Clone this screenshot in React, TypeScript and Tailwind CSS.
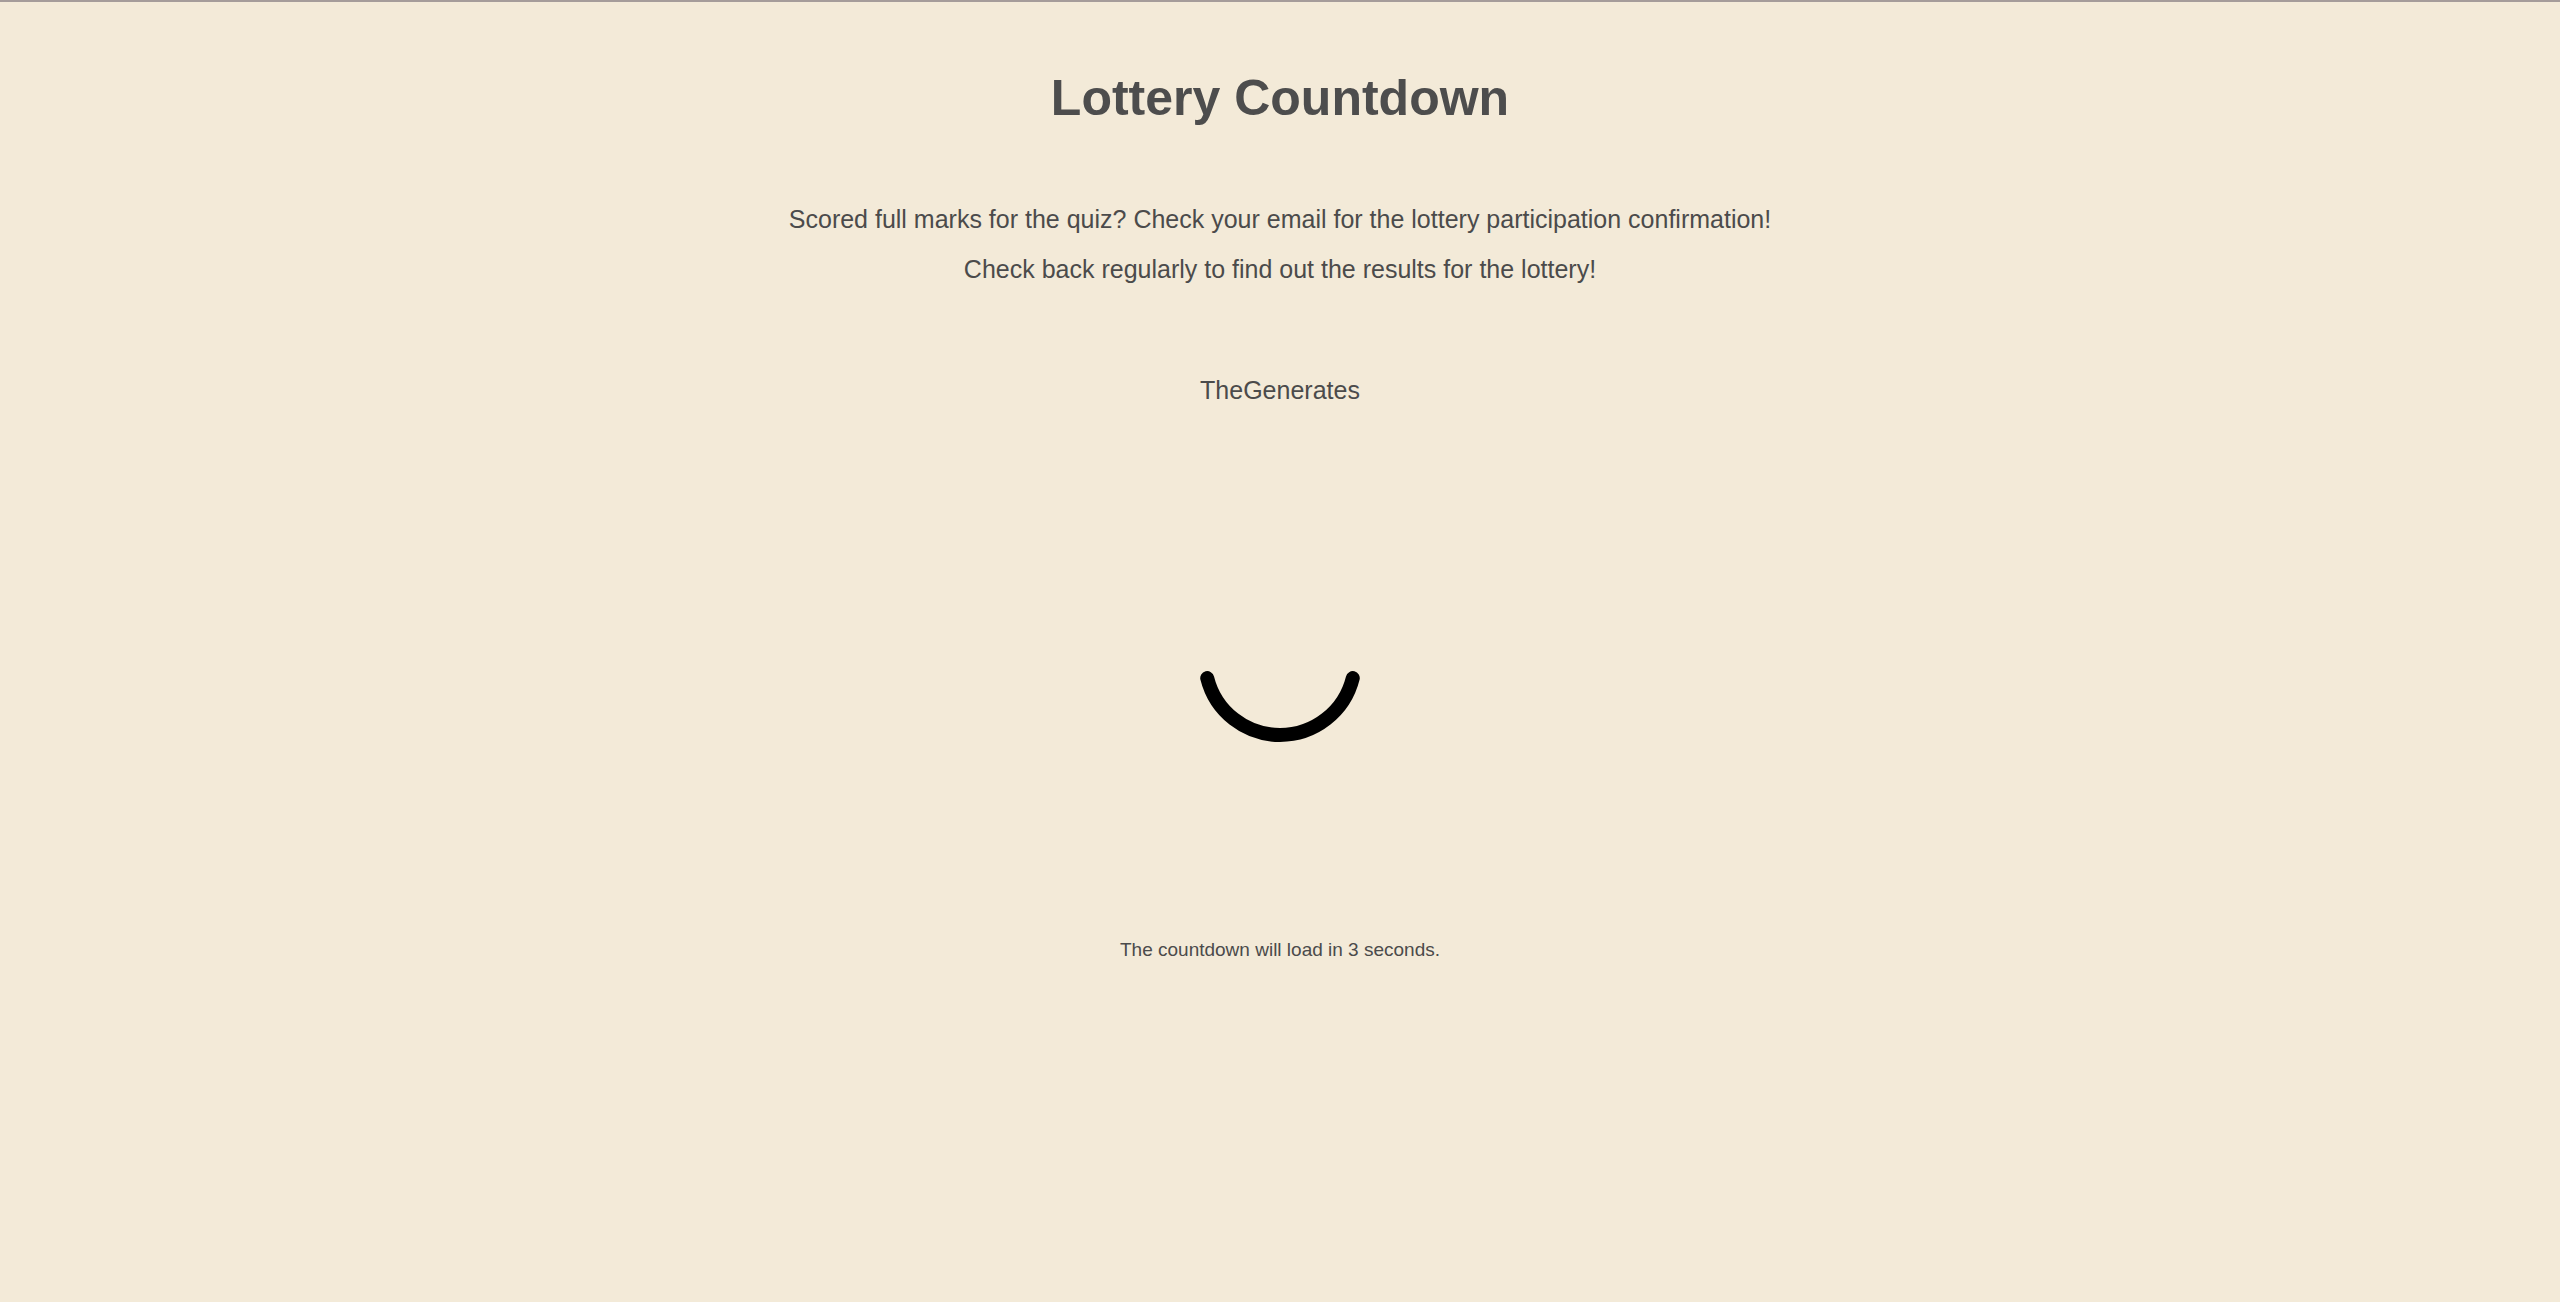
import * as React from "react";

const Spinner: React.FC = () => (
    <svg width="170" height="170" viewBox="0 0 170 170" className="block">
        <path
            d="M 157.77 103.14 A 75 75 0 0 1 12.23 103.14"
            fill="none"
            stroke="#000"
            strokeWidth="14"
            strokeLinecap="round"
        />
    </svg>
);

const App: React.FC = () => {
    return (
        <div
            className="min-h-screen bg-[#f3ead8] border-t-2 border-[#a59c9a] flex flex-col items-center text-[#4b4b4b]"
            style={{ fontFamily: '"Liberation Sans", Arial, sans-serif' }}
        >
            <h1 className="mt-[66px] text-[50px] leading-[60px] font-bold text-[#4d4d4d]">Lottery Countdown</h1>

            <div className="mt-[66px] text-center text-[25px] leading-[50px]">
                <p>Scored full marks for the quiz? Check your email for the lottery participation confirmation!</p>
                <p>Check back regularly to find out the results for the lottery!</p>
            </div>

            <p className="mt-[81px] text-[25px] leading-[30px]">TheGenerates</p>

            <div className="mt-[170px]">
                <Spinner />
            </div>

            <p className="mt-[193px] text-[19px] leading-[24px]">The countdown will load in 3 seconds.</p>
        </div>
    );
};

export default App;
